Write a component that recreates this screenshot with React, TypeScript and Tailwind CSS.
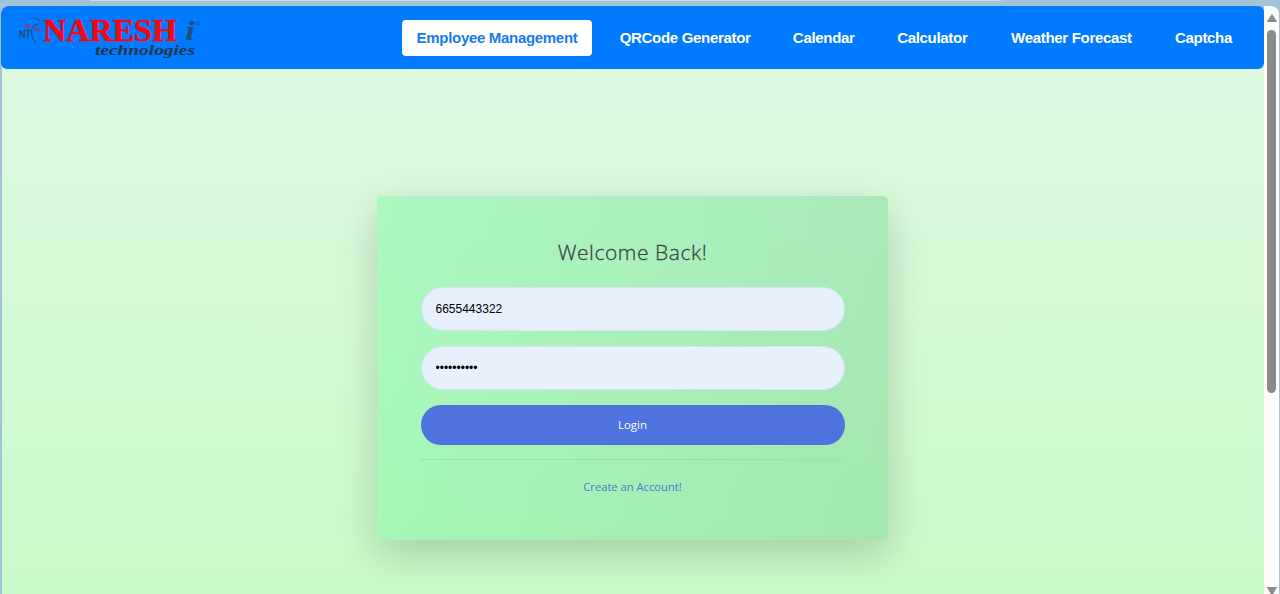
const links = [
  { label: "Employee Management", width: "w-[190px]", active: true },
  { label: "QRCode Generator", width: "w-[161px]" },
  { label: "Calendar", width: "w-[91px]" },
  { label: "Calculator", width: "w-[101px]" },
  { label: "Weather Forecast", width: "w-[152px]" },
  { label: "Captcha", width: "w-[87px]" },
];

function Logo() {
  return (
    <svg className="h-[48px] w-[190px] shrink-0" viewBox="16 14 190 48" role="img" aria-label="Naresh i Technologies">
      <text x="19" y="38" fontSize="11.5" fill="#29466f" stroke="#29466f" strokeWidth=".4" fontFamily="Liberation Sans" textLength="12" lengthAdjust="spacingAndGlyphs">NT</text>
      <path d="M25 24h5v3.5h-5z" fill="#8d3f79" />
      <path d="M33 18l3 .5 4 2M38 24.5c-5 0-7 4-6.5 9s3 7 5 9.5" fill="none" stroke="#29466f" strokeWidth="1" />
      <path d="M35 26l2 4h6M38 29l-4 2" fill="none" stroke="#a53260" strokeWidth="1.2" />
      <text x="43" y="41" fontSize="31" fontWeight="700" fill="#fa0410" stroke="#fa0410" strokeWidth=".5" fontFamily="Liberation Serif" textLength="134" lengthAdjust="spacingAndGlyphs">NARESH</text>
      <text x="185" y="40" fontSize="28" fontWeight="700" fontStyle="italic" fill="#244b82" fontFamily="Liberation Serif" textLength="10" lengthAdjust="spacingAndGlyphs">i</text>
      <circle cx="198" cy="23.5" r="1.4" fill="none" stroke="#29466f" strokeWidth=".7" />
      <text x="95" y="55" fontSize="15" fontWeight="700" fontStyle="italic" fill="#24344d" fontFamily="Liberation Serif" textLength="100" lengthAdjust="spacingAndGlyphs">technologies</text>
    </svg>
  );
}

export default function App() {
  return (
    <div className="flex h-[594px] w-[1280px] flex-col overflow-hidden bg-[#a3c4d8] font-['Liberation_Sans',sans-serif]">
      <div className="flex h-[6px] shrink-0 items-start pl-[90px]">
        <div className="h-px w-[911px] bg-[#c5dfe2]" />
      </div>
      <div className="ml-px mr-px flex min-h-0 flex-1 overflow-hidden rounded-t-[8px] bg-[#fcfcfc]">
        <div className="flex w-[1263px] shrink-0 flex-col bg-[#a3c4d8]">
          <header className="z-10 flex h-[63px] w-[1263px] shrink-0 items-center rounded-[6px] bg-[#007bff] pl-[15px] pr-[17px]">
            <Logo />
            <nav className="ml-auto flex gap-[12.6px]">
              {links.map((link) => (
                <a
                  key={link.label}
                  href="#"
                  className={`${link.width} ${link.active ? "bg-white text-[#187bed]" : "text-white"} flex h-[36px] items-center justify-center rounded-[4px] pt-px text-[15px] font-bold tracking-[-0.31px] whitespace-nowrap`}
                >
                  {link.label}
                </a>
              ))}
            </nav>
          </header>
          <main className="-mt-[6px] ml-px flex flex-1 justify-center bg-linear-to-b from-[#e0f9e1] to-[#c9fac9] pt-[133px] pr-px">
            <form className="flex h-[344px] w-[511px] flex-col items-center rounded-[5px] bg-[linear-gradient(to_bottom,rgba(190,240,225,0.16),rgba(140,240,150,0.12)),linear-gradient(100deg,#a9fabc,#a5e5b2)] px-[43px] pt-[41px] font-['Open_Sans',sans-serif] shadow-[0_14px_42px_rgba(0,0,0,0.18)]">
              <h1 className="text-[21px] leading-[30px] font-light tracking-[0.55px] whitespace-nowrap text-[#35483f] [-webkit-text-stroke:0.3px_#35483f]">Welcome Back!</h1>
              <input readOnly value="6655443322" className="mt-[20px] h-[44px] w-[424px] shrink-0 rounded-full border border-[#d5e5e8] bg-[#e8f0fe] px-[14px] font-['Liberation_Sans',sans-serif] text-[12px] text-black" />
              <input readOnly type="password" value="6655443322" className="mt-[15px] h-[44px] w-[424px] shrink-0 rounded-full border border-[#d5e5e8] bg-[#e8f0fe] px-[14px] font-['Liberation_Sans',sans-serif] text-[12px] text-black" />
              <button type="button" className="mt-[15px] h-[40px] w-[424px] shrink-0 rounded-full bg-[#4e73df] text-[11.5px] text-white">Login</button>
              <hr className="mt-[14px] w-[424px] border-[#9be0ac]" />
              <a href="#" className="mt-[18px] text-[11.2px] leading-[18px] text-[#4e79d2]">Create an Account!</a>
            </form>
          </main>
        </div>
        <div className="flex flex-1 flex-col items-center">
          <svg className="mt-[8px] h-[8px] w-[10px]" viewBox="0 0 10 8"><path d="M5 .5L9.5 7.5H.5Z" fill="#8b8b8b" stroke="#8b8b8b" strokeLinejoin="round" /></svg>
          <div className="mt-[8px] h-[363px] w-[9px] shrink-0 rounded-full bg-[#8b8b8b]" />
          <svg className="mt-auto h-[7px] w-[10px]" viewBox="0 0 10 7"><path d="M.5.5h9L5 8Z" fill="#8b8b8b" stroke="#8b8b8b" /></svg>
        </div>
      </div>
    </div>
  );
}
